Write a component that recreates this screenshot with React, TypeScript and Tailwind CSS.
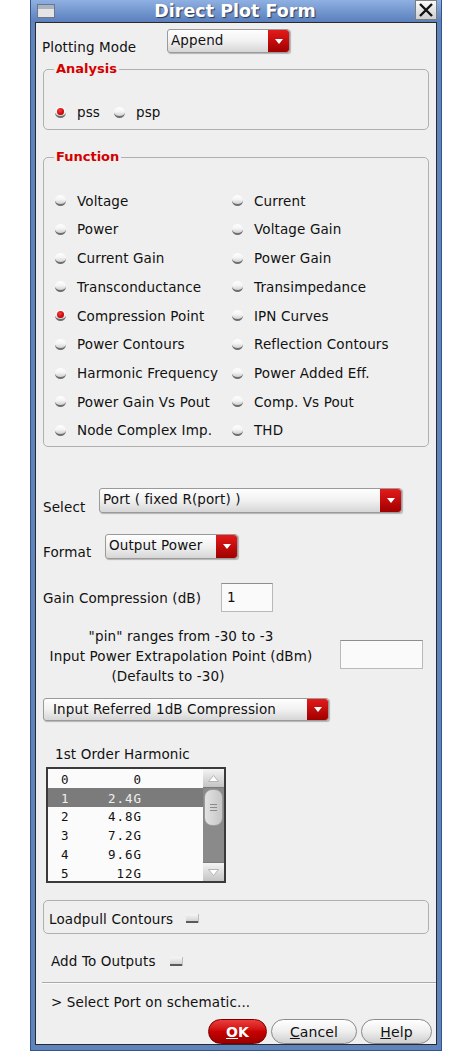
import type { ReactNode } from 'react';

// Direct Plot Form — Cadence-style dialog

const LEFT_FUNCS = ['Voltage', 'Power', 'Current Gain', 'Transconductance', 'Compression Point', 'Power Contours', 'Harmonic Frequency', 'Power Gain Vs Pout', 'Node Complex Imp.'];
const RIGHT_FUNCS = ['Current', 'Voltage Gain', 'Power Gain', 'Transimpedance', 'IPN Curves', 'Reflection Contours', 'Power Added Eff.', 'Comp. Vs Pout', 'THD'];
const HARMONICS: [string, string][] = [
  ['0', '0'],
  ['1', '2.4G'],
  ['2', '4.8G'],
  ['3', '7.2G'],
  ['4', '9.6G'],
  ['5', '12G'],
];

function Radio({ checked = false }: { checked?: boolean }) {
  return (
    <span className="relative inline-block w-[11px] h-[11px] shrink-0 rounded-full bg-gradient-to-b from-[#ffffff] via-[#f4f4f4] to-[#d0d0d0] border-b-[2px] border-b-[#6e6e6e]">
      {checked && <span className="absolute left-[2px] top-[1px] w-[7px] h-[7px] rounded-full bg-[radial-gradient(circle_at_40%_35%,#ff3a3a,#c00000_70%)]" />}
    </span>
  );
}

function Check() {
  return <span className="inline-block w-[12px] h-[9px] bg-gradient-to-b from-[#f6f6f6] to-[#d4d4d4] border-b-[2px] border-b-[#5a5a5a] shadow-[1px_0_0_#bdbdbd]" />;
}

function Dropdown({ text, className = '', pad = 'pl-[3px]' }: { text: string; className?: string; pad?: string }) {
  return (
    <div className={`flex rounded-[3px] border border-[#9a9a9a] bg-gradient-to-b from-[#fefefe] via-[#f1f1f1] to-[#d6d6d6] shadow-[1px_1px_1px_rgba(0,0,0,0.25)] ${className}`}>
      <span className={`flex-1 pt-[1px] leading-[18px] whitespace-nowrap ${pad}`}>{text}</span>
      <span className="w-[21px] flex items-center justify-center rounded-r-[3px] bg-gradient-to-b from-[#e41a1a] to-[#a00000]">
        <svg width="8" height="5" viewBox="0 0 8 5">
          <path d="M0 0H8L4 5Z" fill="#ffffff" />
        </svg>
      </span>
    </div>
  );
}

function Group({ legend, className = '', children }: { legend?: string; className?: string; children: ReactNode }) {
  return (
    <div className={`relative ml-[7px] w-[386px] rounded-[5px] border border-[#b0b0b0] ${className}`}>
      {legend && (
        <span className="absolute left-[10px] -top-[9px] px-[2px] bg-[#efefef] text-[13px] font-bold leading-[16px] tracking-normal text-[#d40000]">{legend}</span>
      )}
      {children}
    </div>
  );
}

function PillButton({ children, red = false, className = '' }: { children: ReactNode; red?: boolean; className?: string }) {
  return (
    <button
      className={`h-[25px] rounded-full border text-[14px] leading-[22px] ${
        red
          ? 'border-[#7a0000] bg-gradient-to-b from-[#ee3a3a] via-[#c80000] to-[#9a0000] text-white font-bold'
          : 'border-[#8a8a8a] bg-gradient-to-b from-[#ffffff] via-[#eeeeee] to-[#cfcfcf] text-[#111]'
      } ${className}`}
    >
      {children}
    </button>
  );
}

export default function App() {
  return (
    <div className="w-[473px] h-[1055px] bg-white font-['DejaVu_Sans',sans-serif] text-[13.5px] tracking-[0.12px] text-[#111]">
      <div className="ml-[30px] w-[412px] h-[1051px] bg-[#5f83bd] border-x border-b border-[#34548a] flex flex-col">
        {/* title bar */}
        <div className="h-[22px] flex items-center bg-gradient-to-b from-[#8fb0e2] to-[#5a7fbc]">
          <div className="ml-[6px] w-[18px] h-[14px] border border-[#6d7686] bg-[#e4e4e4] flex flex-col">
            <div className="h-[4px] bg-[#a9b3c4]" />
          </div>
          <div className="flex-1 text-center text-white font-bold text-[17.5px] leading-[20px] tracking-normal [text-shadow:1px_1px_1px_#2a3a5a]">Direct Plot Form</div>
          <div className="mr-[4px] -mt-[2px] w-[22px] h-[20px] flex items-center justify-center border border-[#7d7d7d] bg-gradient-to-b from-[#fafafa] to-[#cfcfcf]">
            <svg width="14" height="14" viewBox="0 0 14 14">
              <path d="M1 1L13 13M13 1L1 13" stroke="#111" strokeWidth="2.4" />
            </svg>
          </div>
        </div>

        {/* content */}
        <div className="mx-[4px] h-[1023px] border border-[#2a2a2a] bg-[#efefef] flex flex-col">
          <div className="mt-[6px] flex items-start">
            <span className="pl-[6px] pt-[10px] w-[131px] leading-[16px]">Plotting Mode</span>
            <Dropdown text="Append" className="w-[123px] h-[24px]" />
          </div>

          <Group legend="Analysis" className="mt-[14px] h-[61px]">
            <div className="pt-[34px] pl-[11px] flex items-center leading-[16px]">
              <Radio checked />
              <span className="ml-[11px]">pss</span>
              <span className="ml-[14px] flex">
                <Radio />
              </span>
              <span className="ml-[11px]">psp</span>
            </div>
          </Group>

          <Group legend="Function" className="mt-[27px] h-[293px]">
            <div className="pt-[29px] pl-[11px] grid grid-cols-[177px_1fr]">
              {LEFT_FUNCS.map((l, i) => (
                <div key={l} className="contents">
                  <div className="h-[28.7px] flex items-center">
                    <Radio checked={l === 'Compression Point'} />
                    <span className="ml-[11px] whitespace-nowrap">{l}</span>
                  </div>
                  <div className="h-[28.7px] flex items-center">
                    <Radio />
                    <span className="ml-[11px] whitespace-nowrap">{RIGHT_FUNCS[i]}</span>
                  </div>
                </div>
              ))}
            </div>
          </Group>

          <div className="mt-[41px] flex items-start">
            <span className="pl-[7px] pt-[11px] w-[63px] leading-[16px]">Select</span>
            <Dropdown text="Port ( fixed R(port) )" className="w-[303px] h-[25px]" />
          </div>

          <div className="mt-[19px] flex items-start">
            <span className="pl-[7px] pt-[10px] w-[69px] leading-[16px]">Format</span>
            <Dropdown text="Output Power" className="w-[133px] h-[25px]" />
          </div>

          <div className="mt-[23px] flex items-center">
            <span className="pl-[7px] w-[185px] leading-[16px]">Gain Compression (dB)</span>
            <div className="w-[52px] h-[29px] border border-[#b9b9b9] border-t-[#8e8e8e] bg-[#fafafa] pl-[5px] leading-[27px]">1</div>
          </div>

          <div className="mt-[14px] flex items-start">
            <div className="w-[290px] text-center leading-[20px]">
              <div>"pin" ranges from -30 to -3</div>
              <div>Input Power Extrapolation Point (dBm)</div>
              <div className="pr-[26px]">(Defaults to -30)</div>
            </div>
            <div className="ml-[14px] mt-[14px] w-[83px] h-[29px] border border-[#b9b9b9] border-t-[#8e8e8e] bg-[#fafafa]" />
          </div>

          <Dropdown text="Input Referred 1dB Compression" pad="pl-[9px]" className="mt-[12px] ml-[7px] w-[286px] h-[23px]" />

          <div className="mt-[25px] pl-[19px] leading-[16px]">1st Order Harmonic</div>

          <div className="mt-[5px] ml-[10px] w-[180px] h-[116px] border-2 border-[#3a3a3a] bg-[#fbfbfb] flex">
            <div className="w-[155px] font-['DejaVu_Sans_Mono',monospace] text-[12.5px] tracking-[1px]">
              {HARMONICS.map(([n, f]) => (
                <div key={n} className={`h-[18.8px] flex items-center pt-[3px] ${n === '1' ? 'bg-[#7b7b7b] text-[#f0f0f0]' : ''}`}>
                  <div className="w-[94px] flex">
                    <span className="ml-[13px]">{n}</span>
                    <span className="flex-1 text-right">{f}</span>
                  </div>
                </div>
              ))}
            </div>
            <div className="w-[21px] flex flex-col bg-[#8a8a8a]">
              <div className="h-[19px] flex items-center justify-center bg-gradient-to-b from-[#f4f4f4] to-[#c4c4c4] border-b border-[#7a7a7a]">
                <svg width="11" height="7" viewBox="0 0 11 7">
                  <path d="M0.5 6.5L5.5 0.5L10.5 6.5Z" fill="#ffffff" stroke="#b5b5b5" />
                </svg>
              </div>
              <div className="mx-[1px] mt-[1px] h-[37px] rounded-[8px] border border-[#9a9a9a] bg-gradient-to-r from-[#e2e2e2] to-[#c6c6c6] flex flex-col items-center justify-center gap-[2px]">
                <span className="w-[7px] h-px bg-[#8a8a8a]" />
                <span className="w-[7px] h-px bg-[#8a8a8a]" />
                <span className="w-[7px] h-px bg-[#8a8a8a]" />
              </div>
              <div className="flex-1" />
              <div className="h-[19px] flex items-center justify-center bg-gradient-to-b from-[#f4f4f4] to-[#c4c4c4] border-t border-[#7a7a7a]">
                <svg width="11" height="7" viewBox="0 0 11 7">
                  <path d="M0.5 0.5L5.5 6.5L10.5 0.5Z" fill="#ffffff" stroke="#b5b5b5" />
                </svg>
              </div>
            </div>
          </div>

          <Group className="mt-[17px] h-[34px]">
            <div className="h-full flex items-center pt-[3px] pl-[5px] leading-[16px]">
              <span>Loadpull Contours</span>
              <span className="ml-[13px] flex">
                <Check />
              </span>
            </div>
          </Group>

          <div className="mt-[19px] pl-[15px] flex items-center leading-[16px]">
            <span>Add To Outputs</span>
            <span className="ml-[14px] flex">
              <Check />
            </span>
          </div>

          <div className="mt-[13px] ml-[6px] h-[2px] border-t border-[#a9a9a9] border-b border-b-[#fafafa]" />

          <div className="mt-[10px] pl-[15px] leading-[16px]">&gt; Select Port on schematic...</div>

          <div className="mt-[9px] pr-[4px] flex justify-end gap-[4px]">
            <PillButton red className="w-[59px]">
              <span className="underline">O</span>K
            </PillButton>
            <PillButton className="w-[86px]">
              <span className="underline">C</span>ancel
            </PillButton>
            <PillButton className="w-[71px]">
              <span className="underline">H</span>elp
            </PillButton>
          </div>
        </div>
      </div>
    </div>
  );
}
